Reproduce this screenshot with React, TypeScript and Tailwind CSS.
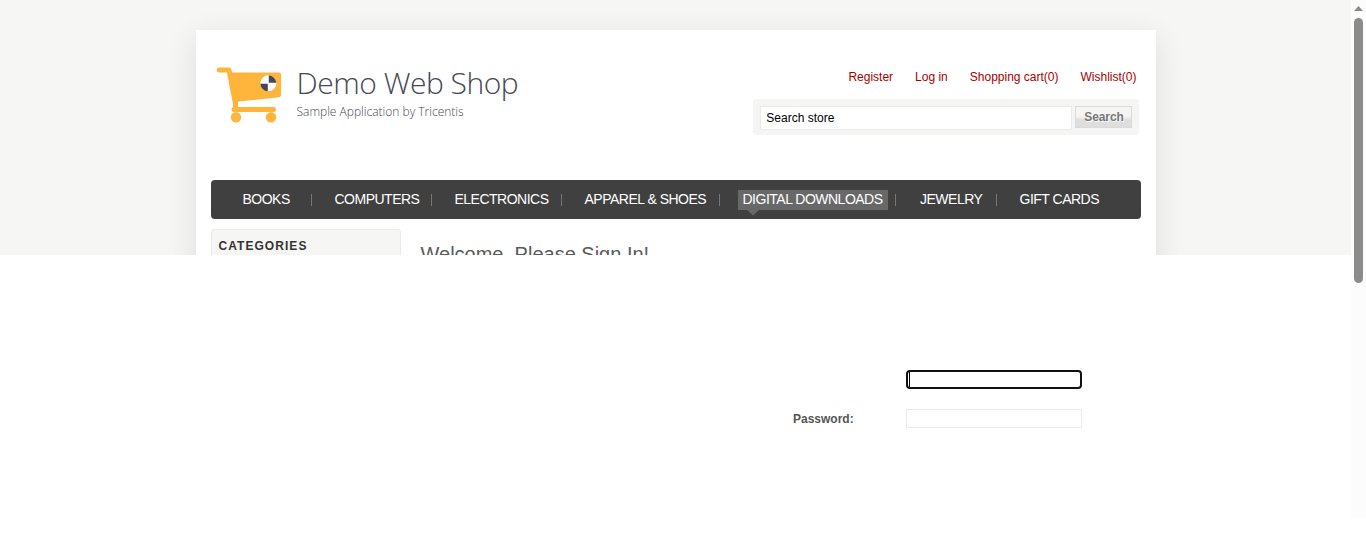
import type { ReactNode } from "react";

function Logo() {
  return (
    <a className="ml-5 flex h-[70px] w-[310px] shrink-0" aria-label="Demo Web Shop">
      <svg width="66" height="58" viewBox="0 0 66 58" className="mt-[6px] shrink-0">
        <g fill="#ffb43c">
          <path d="M14 5.500H63Q65 5.500 65 7.500V28Q65 29.800 63 30.200L19 35Z" />
          <circle cx="20" cy="50.300" r="5.200" />
          <circle cx="55" cy="50.300" r="5.200" />
        </g>
        <path
          d="M3.200 3H13L19.500 37M18 42.500H57.500"
          fill="none"
          stroke="#ffb43c"
          strokeWidth="5"
          strokeLinecap="round"
          strokeLinejoin="round"
        />
        <path d="M19.500 34V42" stroke="#ffb43c" strokeWidth="5" />
        <circle cx="52.300" cy="16.300" r="8" fill="#fff" />
        <path d="M52.800 15.800V8.300A8 8 0 0 1 60.300 15.800ZM51.800 16.800V24.300A8 8 0 0 1 44.300 16.800Z" fill="#454854" />
      </svg>
      <div className="ml-[14px] pt-[3px] font-['Open_Sans',sans-serif] font-light whitespace-nowrap">
        <div className="h-10 pl-[0.500px] text-[30px] leading-[38px] tracking-[-0.480px] text-[#454854]">Demo Web Shop</div>
        <div className="h-4 pl-[0.500px] text-[12px] leading-4 text-[#454854]">Sample Application by Tricentis</div>
      </div>
    </a>
  );
}

function HeaderLinks() {
  return (
    <div className="flex justify-end gap-[22px] pr-[2.500px] text-xs leading-4 text-[#a80000]">
      <a>Register</a>
      <a>Log in</a>
      <a>Shopping cart(0)</a>
      <a>Wishlist(0)</a>
    </div>
  );
}

function SearchBox() {
  return (
    <div className="mt-[14px] flex h-9 w-[386px] rounded-[3px] bg-[#f5f5f4] pt-[7px] pl-[7px]">
      <div className="h-6 w-[312px] border border-[#ebebea] bg-white pl-[5.300px] text-xs leading-[22px] text-black">
        Search store
      </div>
      <button className="ml-[3px] h-[22px] w-[57px] border border-[#dadada] bg-linear-to-b from-[#f5f5f5] from-45% to-[#dedede] to-65% pl-px text-xs leading-5 font-bold tracking-[-0.100px] text-[#777] [text-shadow:1px_1px_1px_#fff]">
        Search
      </button>
    </div>
  );
}

function NavItem({ width, children, last = false }: { width: string; children: ReactNode; last?: boolean }) {
  return (
    <li className={`flex h-full items-center pl-[22.500px] whitespace-nowrap ${width}`}>
      <span className="-mt-[2px]">{children}</span>
      {!last && <span className="ml-auto h-3 w-px bg-[#777]" />}
    </li>
  );
}

function Nav() {
  return (
    <ul className="mx-[15px] flex h-[39px] rounded-[4px] bg-[#404040] pl-[9px] text-[14px] leading-5 tracking-[-0.500px] text-white">
      <NavItem width="w-[92px]">BOOKS</NavItem>
      <NavItem width="w-[120px]">COMPUTERS</NavItem>
      <NavItem width="w-[130px]">ELECTRONICS</NavItem>
      <NavItem width="w-[158px]">APPAREL &amp; SHOES</NavItem>
      <NavItem width="w-[176px]">
        <span className="relative top-px -ml-[4.500px] block h-5 w-[150px] bg-[#686868] pl-[4.500px] leading-[18px]">
          DIGITAL DOWNLOADS
          <svg className="absolute top-5 left-[9px]" width="12" height="6" viewBox="0 0 12 6">
            <path d="M0 0H12L6 5.500Z" fill="#686868" />
          </svg>
        </span>
      </NavItem>
      <NavItem width="w-[101px]">
        <span className="pl-[1.500px]">JEWELRY</span>
      </NavItem>
      <NavItem width="w-[120px]" last>
        GIFT CARDS
      </NavItem>
    </ul>
  );
}

export default function App() {
  return (
    <div className="flex h-[536px] overflow-hidden bg-white font-['Liberation_Sans',Arial,sans-serif]">
      <div className="w-[1351px] shrink-0">
        <div className="h-[255px] overflow-hidden bg-[#f6f6f5] pt-[30px] pl-[196px]">
          <main className="h-[600px] w-[960px] bg-white shadow-[0_8px_30px_rgba(0,0,0,0.1)]">
            <header className="flex h-[150px] pt-[31px]">
              <Logo />
              <div className="mt-2 mr-[17px] ml-auto w-[386px]">
                <HeaderLinks />
                <SearchBox />
              </div>
            </header>
            <Nav />
            <div className="flex pt-[10px] pl-[15px]">
              <aside className="h-[60px] w-[190px] rounded-t-[3px] border border-[#ebebea] bg-[#f6f6f5] pl-[6.500px] text-xs leading-[33px] font-bold tracking-[1.050px] text-[#333]">
                CATEGORIES
              </aside>
              <h1 className="mt-[13px] ml-[19.500px] text-xl leading-6 text-[#5a5a5a]">Welcome, Please Sign In!</h1>
            </div>
          </main>
        </div>
        <form className="pt-[115px]">
          <div className="ml-[906px] flex h-[19px] w-[176px] rounded-[4px] border-2 border-[#101010] bg-white">
            <span className="ml-px h-full w-px bg-black" />
          </div>
          <div className="mt-5 flex h-[19px] items-center">
            <label className="ml-[793px] w-[113px] text-xs leading-4 font-bold text-[#555]">Password:</label>
            <div className="h-[19px] w-[176px] border border-[#ebebeb] bg-white" />
          </div>
        </form>
      </div>
      <div className="flex h-[518px] w-[15px] flex-col items-center bg-[#fcfcfc] pt-[6px]">
        <svg width="9" height="5" viewBox="0 0 9 5">
          <path d="M4.500 0L9 5H0Z" fill="#8b8b8b" />
        </svg>
        <div className="mt-[7px] h-[265px] w-[9px] rounded-full bg-[#8b8b8b]" />
      </div>
    </div>
  );
}
